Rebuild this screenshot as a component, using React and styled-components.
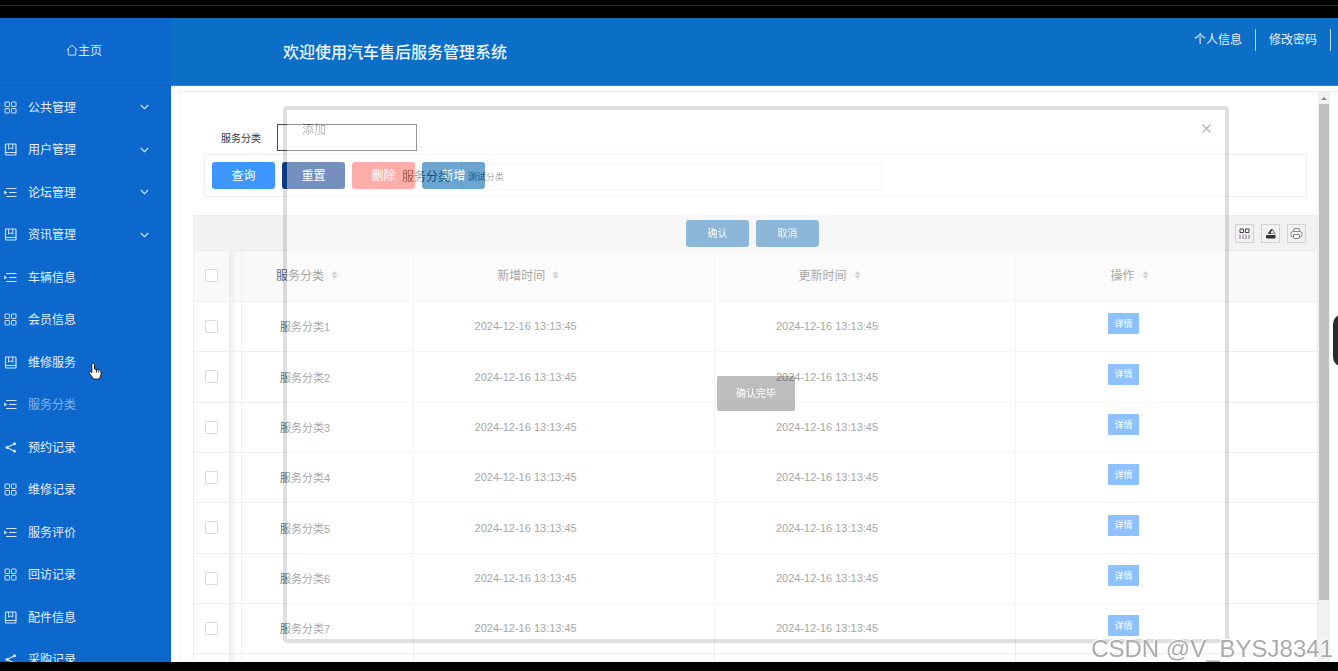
import React from 'react'
import styled, { createGlobalStyle, css } from 'styled-components'

const GlobalStyle = createGlobalStyle`
    * {
        box-sizing: border-box;
    }

    body {
        margin: 0;
        overflow: hidden;
        background: #000;
        font-family: 'Liberation Sans', 'Noto Sans CJK SC', sans-serif;
        font-size: 12px;
        color: #666;
    }

    button,
    input {
        font-family: inherit;
    }
`

const Page = styled.div`
    display: flex;
    flex-direction: column;
    height: 100vh;
`

const TopStrip = styled.div`
    flex: none;
    height: 18px;
    padding-top: 5px;

    &::before {
        content: '';
        display: block;
        height: 1px;
        background: #2c2c2c;
    }
`

const BottomStrip = styled.div`
    flex: none;
    height: 9px;
`

const Shell = styled.div`
    flex: 1;
    min-height: 0;
    display: flex;
    background: #fff;
    overflow: hidden;
`

const Sidebar = styled.nav`
    flex: none;
    width: 171px;
    background: #0c68cd;
    overflow: hidden;
`

const HomeLink = styled.a`
    display: flex;
    align-items: center;
    justify-content: center;
    height: 68px;
    padding: 0 3px 4px 0;
    border-bottom: 1px solid #0b60bf;
    color: #d9e8fa;
    text-decoration: none;
`

const Menu = styled.ul`
    margin: 0;
    padding: 0;
    list-style: none;
`

const MenuItem = styled.li`
    height: 42px;

    &:nth-child(even) {
        height: 43px;
    }
`

const MenuLink = styled.a`
    display: flex;
    align-items: center;
    gap: 11px;
    height: 100%;
    padding: 0 22px 0 4px;
    color: ${({ $active }) => ($active ? '#83b1e8' : '#e4effc')};
    text-decoration: none;

    svg {
        flex: none;
        color: #d3e4f9;
    }

    span {
        flex: 1;
        padding-bottom: 2px;
    }
`

const Main = styled.div`
    flex: 1;
    min-width: 0;
    display: flex;
    flex-direction: column;
`

const Header = styled.header`
    flex: none;
    display: flex;
    align-items: center;
    justify-content: space-between;
    height: 68px;
    padding-left: 112px;
    background: #0c6fc7;
    border-bottom: 1px solid #2f86d0;
`

const Title = styled.h1`
    margin: 0;
    padding-bottom: 2px;
    font-size: 16px;
    font-weight: 500;
    color: #eef5fc;
`

const UserLinks = styled.div`
    display: flex;
    align-self: flex-start;
    padding: 11px 7px 0 0;
`

const UserLink = styled.a`
    height: 22px;
    padding: 0 13px;
    border-right: 1px solid #b9d9f2;
    line-height: 22px;
    color: #e4effc;
    text-decoration: none;
`

const Frame = styled.div`
    flex: 1;
    min-height: 0;
    display: flex;
    margin: 5px 0 0 8px;
    padding-right: 8px;
    border-top: 1px solid #eee;
    border-left: 1px solid #f2f2f2;
`

const Content = styled.main`
    flex: 1;
    min-width: 0;
    overflow: hidden;
`

const SearchRow = styled.div`
    display: flex;
    align-items: center;
    gap: 16px;
    padding: 32px 0 3px 41px;
`

const SearchLabel = styled.label`
    font-size: 10px;
    color: #333;
`

const SearchInput = styled.input`
    width: 140px;
    height: 27px;
    border: 1px solid #4a4a4a;
    background: #fff;
`

const Actions = styled.div`
    display: flex;
    gap: 7px;
    margin: 0 11px 18px 24px;
    padding: 7px;
    border: 1px solid #eee;
`

const Button = styled.button`
    width: 63px;
    height: 27px;
    padding: 0 0 2px;
    border: 0;
    border-radius: 3px;
    background: ${({ $color }) => $color};
    color: #fff;
    font-size: ${({ $small }) => ($small ? '10px' : '12px')};
`

const TableView = styled.section`
    margin-left: 13px;
    border: 1px solid #eee;
`

const Toolbar = styled.div`
    display: flex;
    align-items: center;
    justify-content: flex-end;
    gap: 7px;
    height: 35px;
    padding-right: 11px;
    border-bottom: 1px solid #eee;
    background: #f2f2f2;
`

const ToolButton = styled.button`
    display: flex;
    align-items: center;
    justify-content: center;
    width: 19px;
    height: 19px;
    padding: 0;
    border: 1px solid #d2d2d2;
    background: transparent;
    color: #444;
`

const Table = styled.table`
    width: 100%;
    table-layout: fixed;
    border-collapse: collapse;

    td,
    th {
        height: 50px;
        padding: 0 76px 0 0;
        border-right: 1px solid #eee;
        border-bottom: 1px solid #eee;
        font-weight: 400;
        text-align: center;
    }

    th {
        padding: 0 71px 2px 0;
        background-color: #f9f9f9;
    }

    td {
        font-size: 11px;
    }

    tr:nth-child(3n + 2) td {
        height: 51px;
    }

    td:nth-child(2) {
        padding-right: 44px;
    }

    th:nth-child(2) {
        padding-right: 40px;
    }

    td:last-child {
        padding: 0 86px 5px 0;
        border-right: 0;
    }

    th:last-child {
        padding-right: 74px;
        border-right: 0;
    }

    td:first-child,
    th:first-child {
        padding: 0 11px 0 0;
        background-image: linear-gradient(to right, #ececec, #fff0 8px);
        background-position: 35px 0;
        background-repeat: no-repeat;
    }
`

const Checkbox = styled.input`
    appearance: none;
    display: block;
    width: 13px;
    height: 13px;
    margin: 0 auto;
    border: 1px solid #dcdcdc;
    border-radius: 1px;
    background: #fff;
`

const SortLabel = styled.span`
    display: inline-flex;
    align-items: center;
    gap: 7px;
`

const DetailButton = styled.button`
    width: 31px;
    height: 21px;
    padding: 0 0 1px;
    border: 0;
    border-radius: 1px;
    background: #3e93ff;
    color: #fff;
    font-size: 9px;
`

const Scrollbar = styled.div`
    flex: none;
    display: flex;
    flex-direction: column;
    align-items: center;
    width: 12px;
    background: #f1f1f1;

    svg {
        flex: none;
    }
`

const Thumb = styled.div`
    width: 10px;
    height: 87%;
    background: #c1c1c1;
`

const Dialog = styled.div`
    position: fixed;
    top: 106px;
    right: 109px;
    bottom: 28px;
    left: 283px;
    border: 4px solid rgba(0, 0, 0, 0.3);
    border-radius: 4px;
    background: #fff;
    background-clip: padding-box;
    opacity: 0.42;
`

const DialogHead = styled.div`
    display: flex;
    align-items: center;
    justify-content: space-between;
    height: 37px;
    padding: 0 12px 0 15px;
    border-bottom: 1px solid #eee;
    color: #555;
`

const CloseButton = styled.button`
    display: flex;
    padding: 0;
    border: 0;
    background: none;
    color: #555;
`

const DialogField = styled.div`
    display: flex;
    align-items: center;
    margin: 16px 0 30px 115px;
    color: #222;

    label {
        padding-bottom: 2px;
    }

    input {
        width: 421px;
        height: 27px;
        margin-left: 11px;
        padding: 0 6px;
        border: 1px solid #e6e6e6;
        background: #fff;
        color: #333;
        font-size: 9px;
    }
`

const DialogButtons = styled.div`
    display: flex;
    justify-content: center;
    gap: 7px;
    padding-right: 7px;
`

const overlay = css`
    position: fixed;
    pointer-events: none;
`

const Toast = styled.div`
    ${overlay}
    top: 376px;
    left: 717px;
    padding: 0 19px;
    border-radius: 2px;
    background: rgba(0, 0, 0, 0.26);
    color: #fff;
    font-size: 10px;
    line-height: 35px;
`

const Handle = styled.div`
    ${overlay}
    top: 314px;
    right: -15px;
    width: 20px;
    height: 53px;
    border-radius: 10px;
    background: #2b2b2b;
`

const Pointer = styled.svg`
    ${overlay}
    top: 362px;
    left: 88px;
`

const Watermark = styled.div`
    ${overlay}
    right: 5px;
    bottom: 8px;
    font-size: 24px;
    line-height: 28px;
    color: #ababab;
    text-shadow: -1px -1px 0 #fff;
    white-space: nowrap;
`

const shapes = {
    grid: (
        <>
            <rect x="1" y="1" width="4.5" height="4.5" rx="0.6" />
            <rect x="7.5" y="1" width="4.5" height="4.5" rx="0.6" />
            <rect x="1" y="7.5" width="4.5" height="4.5" rx="0.6" />
            <rect x="7.5" y="7.5" width="4.5" height="4.5" rx="0.6" />
        </>
    ),
    book: (
        <>
            <rect x="1.5" y="1" width="10.5" height="11" rx="1" strokeWidth="1.2" />
            <path d="M4.6 1v5.200l2.100-1.400 2.100 1.400V1M1.500 9.500H12" />
        </>
    ),
    list: (
        <>
            <path d="M2 2.500h10.500M5 6.500h7.500M2 10.500h10.500" strokeWidth="1.1" />
            <path d="M.2 4.500v4L3.300 6.500z" fill="currentColor" stroke="none" />
        </>
    ),
    share: (
        <>
            <path d="M10.500 2.800L3 6.500l7.500 3.700" strokeWidth="1.2" />
            <circle cx="10.500" cy="2.800" r="1.100" fill="currentColor" />
            <circle cx="3" cy="6.500" r="1.100" fill="currentColor" />
            <circle cx="10.500" cy="10.200" r="1.100" fill="currentColor" />
        </>
    ),
    home: <path d="M.8 6.700L6.500 1.200l5.700 5.500M2.500 5.500V12h8V5.500" />,
    close: <path d="M2.500 2.500l8 8M10.500 2.500l-8 8" strokeWidth="1.4" />,
    columns: (
        <>
            <path d="M2 2h3.500v3.500H2zM7.500 2H11v3.500H7.500z" />
            <path d="M2 7.500V12M5 7.500V12M8 7.500V12M11 7.500V12" stroke="#86748c" />
        </>
    ),
    upload: (
        <>
            <path d="M2.500 8.500h8.500V11H2.500z" fill="#333" stroke="#333" />
            <path d="M3.500 6.500h6M7.500 3.200h2v2.500h1.500V8" stroke="#888" />
            <path d="M4 6l3-4h2L7 5v2H4z" fill="#444" stroke="none" />
        </>
    ),
    print: (
        <g stroke="#8a8a8a">
            <path d="M3.500 4.500V3q0-1.500 1.500-1.500h3Q9.500 1.500 9.500 3v1.500" />
            <rect x="1" y="4.500" width="11" height="5.500" rx="2" />
            <path d="M3.500 7.500h6V10q0 1.500-1.500 1.500H5Q3.500 11.500 3.500 10z" fill="#f2f2f2" />
        </g>
    ),
}

const Icon = ({ name, size = 13 }) => (
    <svg width={size} height={size} viewBox="0 0 13 13" fill="none" stroke="currentColor" aria-hidden="true">
        {shapes[name]}
    </svg>
)

const Chevron = () => (
    <svg width="9" height="6" viewBox="0 0 9 6" fill="none" stroke="currentColor" strokeWidth="1.2">
        <path d="M.8 1l3.700 3.700L8.200 1" />
    </svg>
)

const SortIcon = () => (
    <svg width="7" height="10" viewBox="0 0 7 10" fill="#b2b2b2">
        <path d="M3.500 1L6.500 4.500h-6zM3.500 9l3-3.500h-6z" />
    </svg>
)

const menu = [
    { label: '公共管理', icon: 'grid', open: true },
    { label: '用户管理', icon: 'book', open: true },
    { label: '论坛管理', icon: 'list', open: true },
    { label: '资讯管理', icon: 'book', open: true },
    { label: '车辆信息', icon: 'list' },
    { label: '会员信息', icon: 'grid' },
    { label: '维修服务', icon: 'book' },
    { label: '服务分类', icon: 'list', active: true },
    { label: '预约记录', icon: 'share' },
    { label: '维修记录', icon: 'grid' },
    { label: '服务评价', icon: 'list' },
    { label: '回访记录', icon: 'grid' },
    { label: '配件信息', icon: 'book' },
    { label: '采购记录', icon: 'share' },
]

const columns = ['服务分类', '新增时间', '更新时间', '操作']

const rows = [1, 2, 3, 4, 5, 6, 7].map(n => ({
    name: `服务分类${n}`,
    created: '2024-12-16 13:13:45',
    updated: '2024-12-16 13:13:45',
}))

const SideMenu = () => (
    <Sidebar>
        <HomeLink href="#home">
            <Icon name="home" size={12} />
            主页
        </HomeLink>
        <Menu>
            {menu.map(item => (
                <MenuItem key={item.label}>
                    <MenuLink href="#" $active={item.active}>
                        <Icon name={item.icon} />
                        <span>{item.label}</span>
                        {item.open && <Chevron />}
                    </MenuLink>
                </MenuItem>
            ))}
        </Menu>
    </Sidebar>
)

const CategoryTable = () => (
    <TableView>
        <Toolbar>
            <ToolButton aria-label="筛选列">
                <Icon name="columns" />
            </ToolButton>
            <ToolButton aria-label="导出">
                <Icon name="upload" />
            </ToolButton>
            <ToolButton aria-label="打印">
                <Icon name="print" />
            </ToolButton>
        </Toolbar>
        <Table>
            <colgroup>
                <col style={{ width: 47 }} />
                <col style={{ width: 172 }} />
                <col />
                <col />
                <col />
            </colgroup>
            <thead>
                <tr>
                    <th>
                        <Checkbox type="checkbox" aria-label="全选" />
                    </th>
                    {columns.map(name => (
                        <th key={name}>
                            <SortLabel>
                                {name}
                                <SortIcon />
                            </SortLabel>
                        </th>
                    ))}
                </tr>
            </thead>
            <tbody>
                {rows.map(row => (
                    <tr key={row.name}>
                        <td>
                            <Checkbox type="checkbox" aria-label={row.name} />
                        </td>
                        <td>{row.name}</td>
                        <td>{row.created}</td>
                        <td>{row.updated}</td>
                        <td>
                            <DetailButton>详情</DetailButton>
                        </td>
                    </tr>
                ))}
                <tr>
                    <td />
                    <td />
                    <td />
                    <td />
                    <td />
                </tr>
            </tbody>
        </Table>
    </TableView>
)

const AddDialog = () => (
    <Dialog role="dialog" aria-label="添加">
        <DialogHead>
            添加
            <CloseButton aria-label="关闭">
                <Icon name="close" />
            </CloseButton>
        </DialogHead>
        <DialogField>
            <label htmlFor="category">服务分类</label>
            <input id="category" defaultValue="测试分类" />
        </DialogField>
        <DialogButtons>
            <Button $color="#0068b7" $small>
                确认
            </Button>
            <Button $color="#0068b7" $small>
                取消
            </Button>
        </DialogButtons>
    </Dialog>
)

const App = () => (
    <>
        <GlobalStyle />
        <Page>
            <TopStrip />
            <Shell>
                <SideMenu />
                <Main>
                    <Header>
                        <Title>欢迎使用汽车售后服务管理系统</Title>
                        <UserLinks>
                            <UserLink href="#profile">个人信息</UserLink>
                            <UserLink href="#password">修改密码</UserLink>
                        </UserLinks>
                    </Header>
                    <Frame>
                        <Content>
                            <SearchRow>
                                <SearchLabel htmlFor="search">服务分类</SearchLabel>
                                <SearchInput id="search" />
                            </SearchRow>
                            <Actions>
                                <Button $color="#3d95ff">查询</Button>
                                <Button $color="#0e4091">重置</Button>
                                <Button $color="#ff7369">删除</Button>
                                <Button $color="#0066b2">新增</Button>
                            </Actions>
                            <CategoryTable />
                        </Content>
                        <Scrollbar>
                            <svg width="12" height="12" viewBox="0 0 12 12" fill="#8a8a8a">
                                <path d="M6 5l3 3H3z" />
                            </svg>
                            <Thumb />
                        </Scrollbar>
                    </Frame>
                </Main>
            </Shell>
            <BottomStrip />
        </Page>
        <AddDialog />
        <Toast role="status">确认完毕</Toast>
        <Handle />
        <Pointer width="14" height="18" viewBox="0 0 14 18">
            <path
                d="M5 1.500c1 0 1.500.6 1.500 1.500v4l5 1c1 .3 1.500 1 1.500 2v2.500l-1.500 4.500H5.500L1.200 11c-.6-1 .6-2 1.600-1.200L3.800 11V3c0-1 .4-1.500 1.200-1.500z"
                fill="#fff"
                stroke="#222"
            />
            <path d="M8.500 8v2.500M10.700 8.500v2" stroke="#222" />
        </Pointer>
        <Watermark>CSDN @V_BYSJ8341</Watermark>
    </>
)

export default App
